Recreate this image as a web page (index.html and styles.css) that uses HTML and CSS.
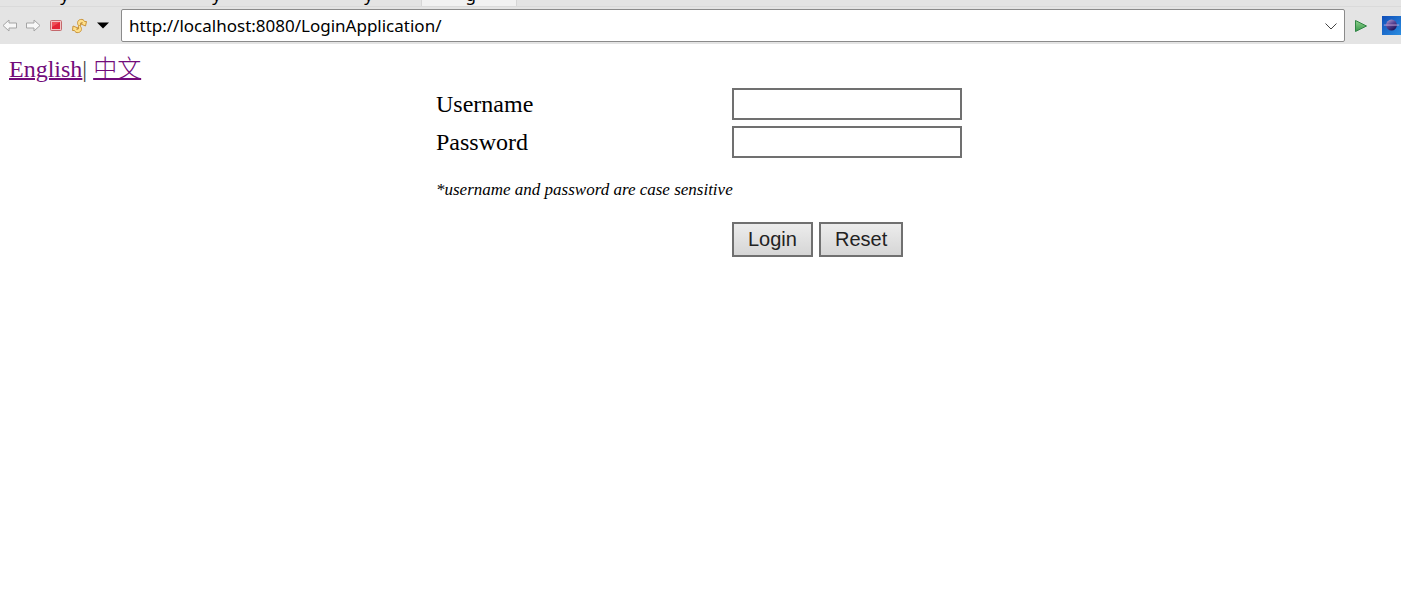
FILE: index.html
```html
<!DOCTYPE html>
<html lang="en">
<head>
<meta charset="utf-8">
<title>Login</title>
<link rel="stylesheet" href="styles.css">
</head>
<body>
<header class="browser">
  <div class="tabs">
    <span class="tab tab-first">y</span>
    <span class="tab">y</span>
    <span class="tab">y</span>
    <span class="tab tab-active">g</span>
  </div>
  <div class="toolbar">
    <div class="tools">
      <button class="tool" type="button" aria-label="Back">
        <svg width="16" height="16" viewBox="0 0 16 16"><path d="M1 7.500 7 2V5H14.500V10H7V13Z" fill="#f7f7f7" stroke="#a5a5a5" stroke-linejoin="round"/></svg>
      </button>
      <button class="tool" type="button" aria-label="Forward">
        <svg width="16" height="16" viewBox="0 0 16 16"><path d="M15 7.500 9 2V5H1.500V10H9V13Z" fill="#f7f7f7" stroke="#a5a5a5" stroke-linejoin="round"/></svg>
      </button>
      <button class="tool" type="button" aria-label="Stop">
        <svg width="16" height="16" viewBox="0 0 16 16"><rect x="2.500" y="2.500" width="11" height="10" rx="1" fill="#f3c5c5" stroke="#c4686c"/><rect x="4" y="4" width="8" height="7" fill="#e32636"/><path d="M4 4H12L4 9Z" fill="#ee5058"/></svg>
      </button>
      <button class="tool" type="button" aria-label="Refresh">
        <svg width="16" height="16" viewBox="0 0 16 16"><g fill="#ffe08a" stroke="#c9933a" stroke-linejoin="round"><path d="M8.500 8.500C5.500 6.500 6 2 9.500 1.500 11.500 1 13 2 13.500 3.500L15.500 3.500 14.500 8 10 6 11.500 4.800C10 3.800 8.500 5.500 9.800 7.200Z"/><path d="M8.500 7.500C11.500 9.500 11 14 7.500 14.500 5.500 15 4 14 3.500 12.500L1.500 12.500 2 8 7 10 5.500 11.200C7 12.200 8.500 10.500 7.200 8.800Z"/></g></svg>
      </button>
      <button class="tool" type="button" aria-label="History">
        <svg width="16" height="16" viewBox="0 0 16 16"><path d="M3 4.500H15L9 10.500Z" fill="#000"/></svg>
      </button>
    </div>
    <div class="address">
      <input class="address-input" type="text" aria-label="Address" value="http://localhost:8080/LoginApplication/">
      <button class="tool" type="button" aria-label="Show addresses">
        <svg width="16" height="16" viewBox="0 0 16 16"><path d="M2.500 5.500 8 11 13.500 5.500" fill="none" stroke="#444"/></svg>
      </button>
    </div>
    <button class="tool" type="button" aria-label="Go">
      <svg width="16" height="16" viewBox="0 0 16 16"><defs><linearGradient id="go" x2="0" y2="1"><stop stop-color="#8fd08c"/><stop offset="1" stop-color="#37984a"/></linearGradient></defs><path d="M2.500 2.500 13.500 8 2.500 13.500Z" fill="url(#go)" stroke="#2f8544" stroke-linejoin="round"/></svg>
    </button>
    <button class="tool tool-eclipse" type="button" aria-label="Open external browser">
      <svg width="21" height="21" viewBox="0 0 21 21"><defs><linearGradient id="sky" x2="1" y2="1"><stop stop-color="#0f4db8"/><stop offset="1" stop-color="#2a8de0"/></linearGradient><linearGradient id="orb" x2=".6" y2="1"><stop stop-color="#b9aedb"/><stop offset=".5" stop-color="#5c4696"/><stop offset="1" stop-color="#20145a"/></linearGradient></defs><path d="M0 0H21V21H0Z" fill="url(#sky)"/><circle cx="10.500" cy="10" r="6" fill="url(#orb)"/><path d="M2 10H19" stroke="#c9a9d8"/></svg>
    </button>
  </div>
</header>
<main class="page">
  <nav class="languages"><a class="language" href="#en">English</a>| <a class="language" href="#zh" lang="zh">中文</a></nav>
  <form class="login">
    <label class="label" for="username">Username</label>
    <input class="field" id="username" name="username" type="text">
    <label class="label" for="password">Password</label>
    <input class="field" id="password" name="password" type="password">
    <p class="note">*username and password are case sensitive</p>
    <div class="actions">
      <button class="button" type="submit">Login</button>
      <button class="button" type="reset">Reset</button>
    </div>
  </form>
</main>
</body>
</html>
```
FILE: styles.css
```css
* {
  box-sizing: border-box;
}

body {
  margin: 0;
  overflow-x: hidden;
  background: #fff;
  color: #000;
  font-family: "Liberation Serif", "Noto Sans CJK SC", serif;
  font-size: 24px;
}

.browser {
  background: #e4e4e4;
  font-family: "Noto Sans", sans-serif;
  font-size: 17px;
}

.tabs {
  display: flex;
  align-items: flex-end;
  height: 7px;
  overflow: hidden;
  border-bottom: 1px solid #dadada;
}

.tab {
  width: 152px;
  padding-right: 48px;
  line-height: 22px;
  text-align: right;
}

.tab-first {
  width: 117px;
}

.tab-active {
  width: 96px;
  padding-right: 40px;
  background: #f1f1f1;
  border: solid #d6d6d6;
  border-width: 0 1px;
}

.toolbar {
  display: flex;
  align-items: center;
  gap: 8px;
  height: 37px;
  padding-left: 2px;
}

.tools {
  display: flex;
  gap: 7px;
  margin-right: 3px;
}

.tool {
  display: flex;
  flex: none;
  padding: 0;
  border: 0;
  background: none;
}

.tool-eclipse {
  margin-left: 5px;
  width: 19px;
  overflow: hidden;
}

.address {
  display: flex;
  flex: 1;
  align-items: center;
  height: 33px;
  padding: 0 5px 0 7px;
  border: 1px solid #8b8b8b;
  border-radius: 2px;
  background: #fff;
}

.address-input {
  flex: 1;
  min-width: 0;
  padding: 0;
  border: 0;
  outline: 0;
  font: inherit;
  line-height: 26px;
}

.page {
  padding: 11px 9px;
}

.languages {
  color: #444;
  line-height: 28px;
}

.language {
  color: #720b7a;
  text-decoration-thickness: 2px;
}

.language:lang(zh) {
  font-weight: 300;
}

.login {
  display: grid;
  grid-template-columns: 290px 233px;
  justify-content: center;
  align-items: center;
  gap: 6px;
  margin-top: 5px;
}

.label {
  line-height: 32px;
}

.field {
  width: 230px;
  height: 32px;
  padding: 2px 4px;
  border: 2px solid #707070;
  font: 20px "Liberation Sans", sans-serif;
}

.note {
  grid-column: 1 / -1;
  margin: 16px 0;
  font-size: 17px;
  font-style: italic;
  line-height: 20px;
}

.actions {
  display: flex;
  grid-column: 2;
  gap: 6px;
}

.button {
  height: 35px;
  padding: 0 14px;
  border: 2px solid #707070;
  background: linear-gradient(#ececec, #d6d6d6);
  color: #222;
  font: 20px "Liberation Sans", sans-serif;
}
```
